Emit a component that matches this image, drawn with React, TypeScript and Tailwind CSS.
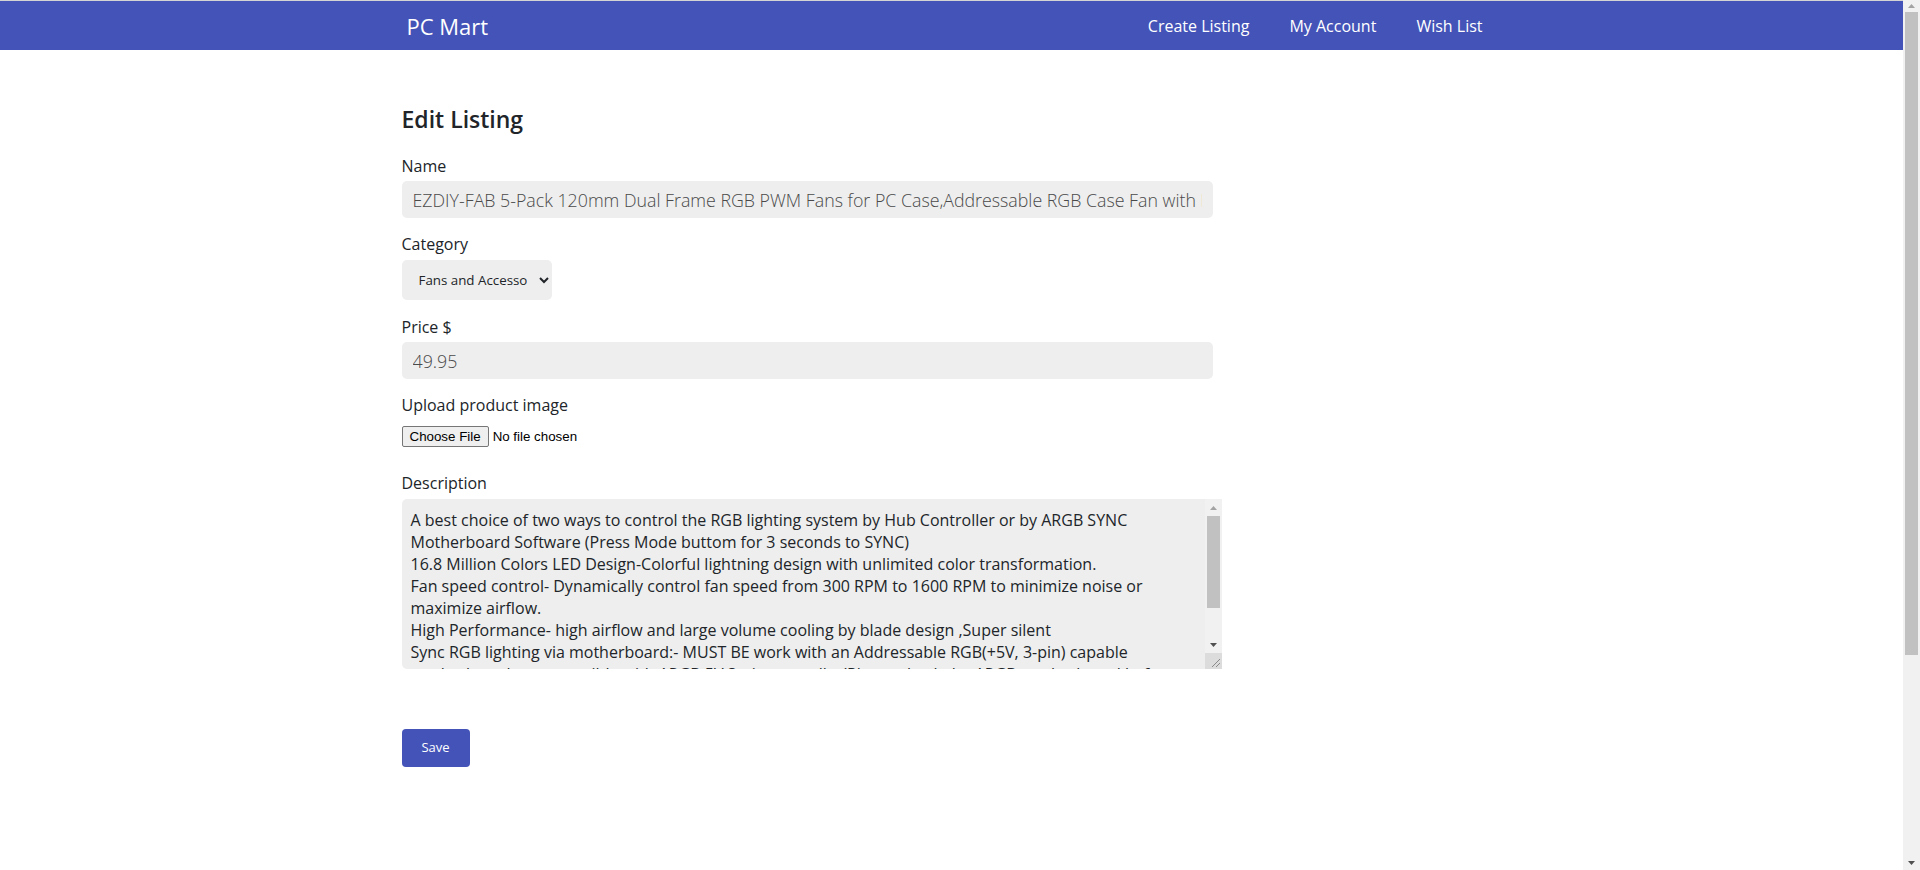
const description = `A best choice of two ways to control the RGB lighting system by Hub Controller or by ARGB SYNC Motherboard Software (Press Mode buttom for 3 seconds to SYNC)
16.8 Million Colors LED Design-Colorful lightning design with unlimited color transformation.
Fan speed control- Dynamically control fan speed from 300 RPM to 1600 RPM to minimize noise or maximize airflow.
High Performance- high airflow and large volume cooling by blade design ,Super silent
Sync RGB lighting via motherboard:- MUST BE work with an Addressable RGB(+5V, 3-pin) capable motherboard or compatible with ARGB 5V 3-pin controller(Please check the ARGB motherboard before purchase)
Package includes: 5 x 120mm ARGB fans, 1 x hub controller, 1 x remote control, screws.`;

const font = "font-['Open_Sans',sans-serif]";

function ArrowUp({ color }: { color: string }) {
  return (
    <svg width="7" height="4" viewBox="0 0 7 4">
      <polygon points="3.5,0 7,4 0,4" fill={color} />
    </svg>
  );
}

function ArrowDown({ color }: { color: string }) {
  return (
    <svg width="7" height="4" viewBox="0 0 7 4">
      <polygon points="0,0 7,0 3.5,4" fill={color} />
    </svg>
  );
}

function Navbar() {
  return (
    <nav className="bg-[#4353b8] border-t border-[#d4d4d4]">
      <div className="w-[1110px] mx-auto h-[49px] flex items-center">
        <a href="#" className="ml-[10px] text-[22px] text-white leading-none">
          PC Mart
        </a>
        <ul className="ml-auto mr-[4px] flex items-center">
          {["Create Listing", "My Account", "Wish List"].map((link) => (
            <li key={link}>
              <a href="#" className="block px-5 text-base text-white">
                {link}
              </a>
            </li>
          ))}
        </ul>
      </div>
    </nav>
  );
}

// textarea with a classic scrollbar drawn beside it
function DescriptionBox() {
  return (
    <div className="flex w-[820px] h-[170px] rounded-l-[5px] bg-[#eeeeee] overflow-hidden">
      <textarea
        defaultValue={description}
        className="flex-1 h-full resize-none overflow-hidden bg-transparent px-[9px] py-[10px] text-base leading-[22px] text-[#212529] outline-none"
      />
      <div className="w-[17px] flex flex-col bg-[#f1f1f1]">
        <div className="h-[17px] flex items-center justify-center">
          <ArrowUp color="#a3a3a3" />
        </div>
        <div className="mx-[2px] h-[92px] bg-[#c1c1c1]" />
        <div className="flex-1" />
        <div className="h-[17px] flex items-center justify-center">
          <ArrowDown color="#505050" />
        </div>
        <div className="h-[16px] bg-[#dcdcdc] flex items-end justify-end">
          <svg width="16" height="16" viewBox="0 0 16 16">
            <line x1="14" y1="6" x2="6" y2="14" stroke="#8a8a8a" strokeWidth="1" />
            <line x1="14" y1="10" x2="10" y2="14" stroke="#8a8a8a" strokeWidth="1" />
          </svg>
        </div>
      </div>
    </div>
  );
}

function PageScrollbar() {
  return (
    <aside className="w-[17px] shrink-0 flex flex-col bg-[#f1f1f1]">
      <div className="h-[12px] flex items-center justify-center">
        <ArrowUp color="#a3a3a3" />
      </div>
      <div className="mx-[2px] h-[643px] bg-[#c1c1c1]" />
      <div className="flex-1" />
      <div className="h-[14px] flex items-center justify-center">
        <ArrowDown color="#505050" />
      </div>
    </aside>
  );
}

export default function App() {
  return (
    <div className={`${font} h-[870px] flex overflow-hidden bg-white text-[#212529]`}>
      <div className="flex-1 min-w-0">
        <Navbar />

        <main className="w-[1110px] mx-auto pl-[5px] pt-[53px]">
          <h3 className="text-[23px] font-semibold leading-8 text-[#212529]">Edit Listing</h3>

          <form className="mt-[19px]" onSubmit={(e) => e.preventDefault()}>
            {/* Name */}
            <label className="block text-base leading-6 mb-[3px]">Name</label>
            <input
              type="text"
              defaultValue="EZDIY-FAB 5-Pack 120mm Dual Frame RGB PWM Fans for PC Case,Addressable RGB Case Fan with Hub Controller"
              className="block w-[811px] h-[37px] px-[11px] rounded-[5px] bg-[#eeeeee] text-[17.8px] font-light text-[#4a4a4a] outline-none"
            />

            {/* Category */}
            <label className="block text-base leading-6 mt-[14px] mb-[4px]">Category</label>
            <select
              defaultValue="fans"
              className="block w-[150px] h-[40px] pl-[13px] pr-[9px] rounded-[5px] bg-[#eeeeee] text-[13.33px] text-[#212529] outline-none"
            >
              <option value="cpu">CPUs</option>
              <option value="gpu">Graphics Cards</option>
              <option value="fans">Fans and Accessories</option>
              <option value="ram">Memory</option>
            </select>

            {/* Price */}
            <label className="block text-base leading-6 mt-[15px] mb-[3px]">Price $</label>
            <input
              type="text"
              defaultValue="49.95"
              className="block w-[811px] h-[37px] px-[11px] rounded-[5px] bg-[#eeeeee] text-[17.8px] font-light text-[#4a4a4a] outline-none"
            />

            {/* Image */}
            <label className="block text-base leading-6 mt-[14px] mb-[9px]">Upload product image</label>
            <input
              type="file"
              className="block h-[21px] font-['Liberation_Sans',Arial,sans-serif] text-[13.33px] text-black file:mr-[4px] file:h-[21px] file:px-[7px] file:border file:border-[#767676] file:rounded-[2px] file:bg-[#efefef] file:text-black"
            />

            {/* Description */}
            <label className="block text-base leading-6 mt-[24px] mb-[4px]">Description</label>
            <DescriptionBox />

            <button
              type="submit"
              className="mt-[60px] w-[68px] h-[38px] rounded-[4px] bg-[#4353b8] text-[13px] text-white"
            >
              Save
            </button>
          </form>
        </main>
      </div>
      <PageScrollbar />
    </div>
  );
}
